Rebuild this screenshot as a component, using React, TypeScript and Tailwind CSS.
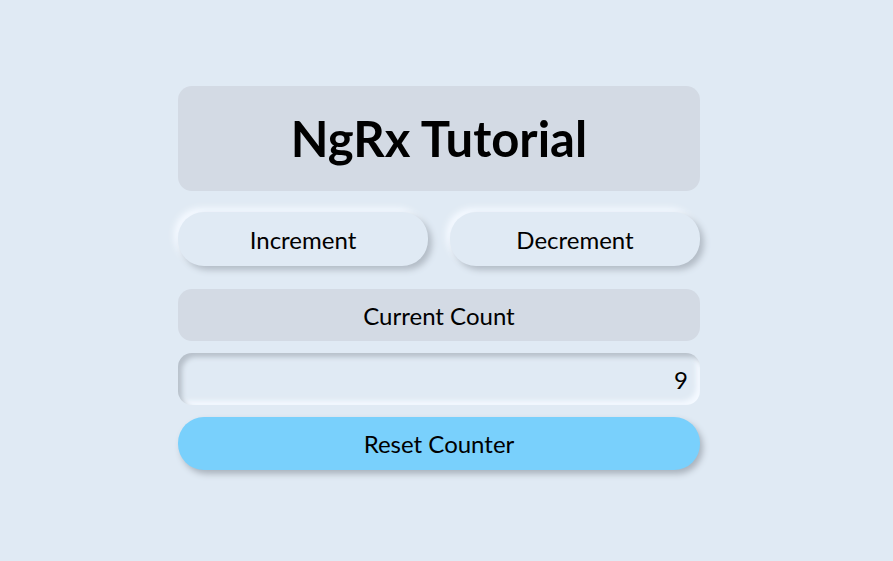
export default function App() {
  return (
    <div
      className="w-[893px] h-[561px] bg-[#e0eaf4] pl-[178px]"
      style={{ fontFamily: "Lato, 'Open Sans', sans-serif" }}
    >
      <div className="w-[522px] pt-[86px] flex flex-col">
        <div className="h-[105px] rounded-[14px] bg-[#d3dae4] flex items-center justify-center">
          <h1 className="text-[49px] font-bold text-black leading-none">NgRx Tutorial</h1>
        </div>

        <div className="mt-[21px] flex gap-[22px]">
          <button className="flex-1 h-[54px] pt-[2px] rounded-[26px] bg-[#e0eaf4] text-[24px] text-black shadow-[4px_4px_6px_#b3bcc6,-4px_-4px_6px_#f4f9ff]">
            Increment
          </button>
          <button className="flex-1 h-[54px] pt-[2px] rounded-[26px] bg-[#e0eaf4] text-[24px] text-black shadow-[4px_4px_6px_#b3bcc6,-4px_-4px_6px_#f4f9ff]">
            Decrement
          </button>
        </div>

        <div className="mt-[23px] h-[52px] pt-[2px] rounded-[14px] bg-[#d3dae4] flex items-center justify-center text-[24px] text-black">
          Current Count
        </div>

        <div className="mt-[12px] h-[52px] pt-[2px] rounded-[14px] bg-[#e0eaf4] flex items-center justify-end pr-[12px] text-[24px] text-black shadow-[inset_4px_4px_5px_#b7c0ca,inset_-4px_-4px_5px_#f4f9ff]">
          9
        </div>

        <button className="mt-[12px] h-[53px] pt-[1px] rounded-[26px] bg-[#79d0fc] text-[24px] text-black shadow-[3px_4px_6px_#aab3bd]">
          Reset Counter
        </button>
      </div>
    </div>
  );
}
